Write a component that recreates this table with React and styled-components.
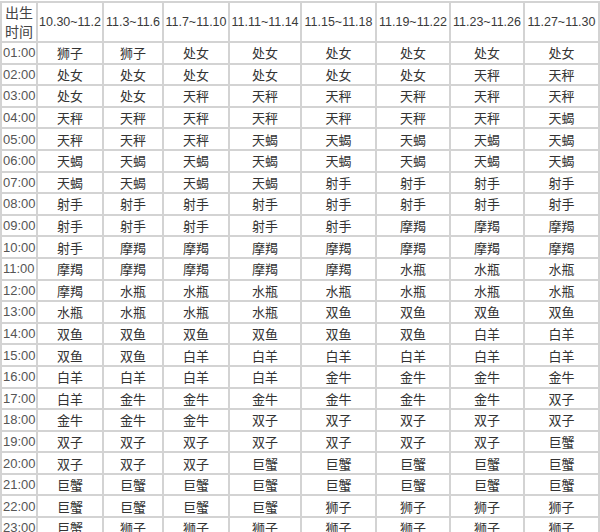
import styled, { createGlobalStyle } from 'styled-components'

const RANGES = ["10.30~11.2", "11.3~11.6", "11.7~11.10", "11.11~11.14", "11.15~11.18", "11.19~11.22", "11.23~11.26", "11.27~11.30"]
const WIDTHS = [36, 66, 60, 66, 72, 75, 74, 74, 75]

const ROWS = [
    ["01:00", "狮子 狮子 处女 处女 处女 处女 处女 处女"],
    ["02:00", "处女 处女 处女 处女 处女 处女 天秤 天秤"],
    ["03:00", "处女 处女 天秤 天秤 天秤 天秤 天秤 天秤"],
    ["04:00", "天秤 天秤 天秤 天秤 天秤 天秤 天秤 天蝎"],
    ["05:00", "天秤 天秤 天秤 天蝎 天蝎 天蝎 天蝎 天蝎"],
    ["06:00", "天蝎 天蝎 天蝎 天蝎 天蝎 天蝎 天蝎 天蝎"],
    ["07:00", "天蝎 天蝎 天蝎 天蝎 射手 射手 射手 射手"],
    ["08:00", "射手 射手 射手 射手 射手 射手 射手 射手"],
    ["09:00", "射手 射手 射手 射手 射手 摩羯 摩羯 摩羯"],
    ["10:00", "射手 摩羯 摩羯 摩羯 摩羯 摩羯 摩羯 摩羯"],
    ["11:00", "摩羯 摩羯 摩羯 摩羯 摩羯 水瓶 水瓶 水瓶"],
    ["12:00", "摩羯 水瓶 水瓶 水瓶 水瓶 水瓶 水瓶 水瓶"],
    ["13:00", "水瓶 水瓶 水瓶 水瓶 双鱼 双鱼 双鱼 双鱼"],
    ["14:00", "双鱼 双鱼 双鱼 双鱼 双鱼 双鱼 白羊 白羊"],
    ["15:00", "双鱼 双鱼 白羊 白羊 白羊 白羊 白羊 白羊"],
    ["16:00", "白羊 白羊 白羊 白羊 金牛 金牛 金牛 金牛"],
    ["17:00", "白羊 金牛 金牛 金牛 金牛 金牛 金牛 双子"],
    ["18:00", "金牛 金牛 金牛 双子 双子 双子 双子 双子"],
    ["19:00", "双子 双子 双子 双子 双子 双子 双子 巨蟹"],
    ["20:00", "双子 双子 双子 巨蟹 巨蟹 巨蟹 巨蟹 巨蟹"],
    ["21:00", "巨蟹 巨蟹 巨蟹 巨蟹 巨蟹 巨蟹 巨蟹 巨蟹"],
    ["22:00", "巨蟹 巨蟹 巨蟹 巨蟹 狮子 狮子 狮子 狮子"],
    ["23:00", "巨蟹 狮子 狮子 狮子 狮子 狮子 狮子 狮子"],
]

const GlobalStyle = createGlobalStyle`
    html, body {
        margin: 0;
        padding: 0;
        background: #ffffff;
        overflow: hidden;
    }
    body {
        font-family: "Liberation Sans", "Noto Sans CJK SC", sans-serif;
    }
`
const Page = styled.div`
    width: 600px;
    height: 532px;
    padding: 1px 0 0 0;
    box-sizing: border-box;
    overflow: hidden;
`
const Table = styled.table`
    width: 599px;
    border-collapse: collapse;
    table-layout: fixed;
    border: 2px solid #d3d3d3;
`
const Col = styled.col`
    width: ${props => props.w}px;
`
const HeadRow = styled.tr`
    height: 40px;
`
const Row = styled.tr`
    height: 21.6px;
`
const Corner = styled.th`
    border: 2px solid #d3d3d3;
    padding: 0 0 0 3px;
    font-family: "Noto Sans CJK SC", sans-serif;
    font-weight: normal;
    font-size: 14px;
    line-height: 19px;
    color: #444;
    text-align: left;
`
const CornerLine = styled.span`
    display: block;
    height: 19px;
`
const RangeCell = styled.th`
    border: 2px solid #d3d3d3;
    padding: 0;
    font-weight: normal;
    font-size: 12.5px;
    color: #3a3a3a;
    text-align: center;
    white-space: nowrap;
    overflow: visible;
`
const TimeCell = styled.td`
    border: 2px solid #d3d3d3;
    padding: 0 0 0 1px;
    font-size: 13px;
    line-height: 1;
    color: #555;
    white-space: nowrap;
`
const SignCell = styled.td`
    border: 2px solid #d3d3d3;
    padding: 0;
    font-family: "Noto Sans CJK SC", sans-serif;
    font-size: 13px;
    line-height: 1;
    color: #333;
    text-align: center;
`

export default function App() {
    return (
        <Page>
            <GlobalStyle />
            <Table>
                <colgroup>
                    {WIDTHS.map((w, i) => <Col key={i} w={w} />)}
                </colgroup>
                <thead>
                    <HeadRow>
                        <Corner>
                            <CornerLine>出生</CornerLine>
                            <CornerLine>时间</CornerLine>
                        </Corner>
                        {RANGES.map(r => <RangeCell key={r}>{r}</RangeCell>)}
                    </HeadRow>
                </thead>
                <tbody>
                    {ROWS.map(([time, signs]) => (
                        <Row key={time}>
                            <TimeCell>{time}</TimeCell>
                            {signs.split(" ").map((s, i) => <SignCell key={i}>{s}</SignCell>)}
                        </Row>
                    ))}
                </tbody>
            </Table>
        </Page>
    )
}
